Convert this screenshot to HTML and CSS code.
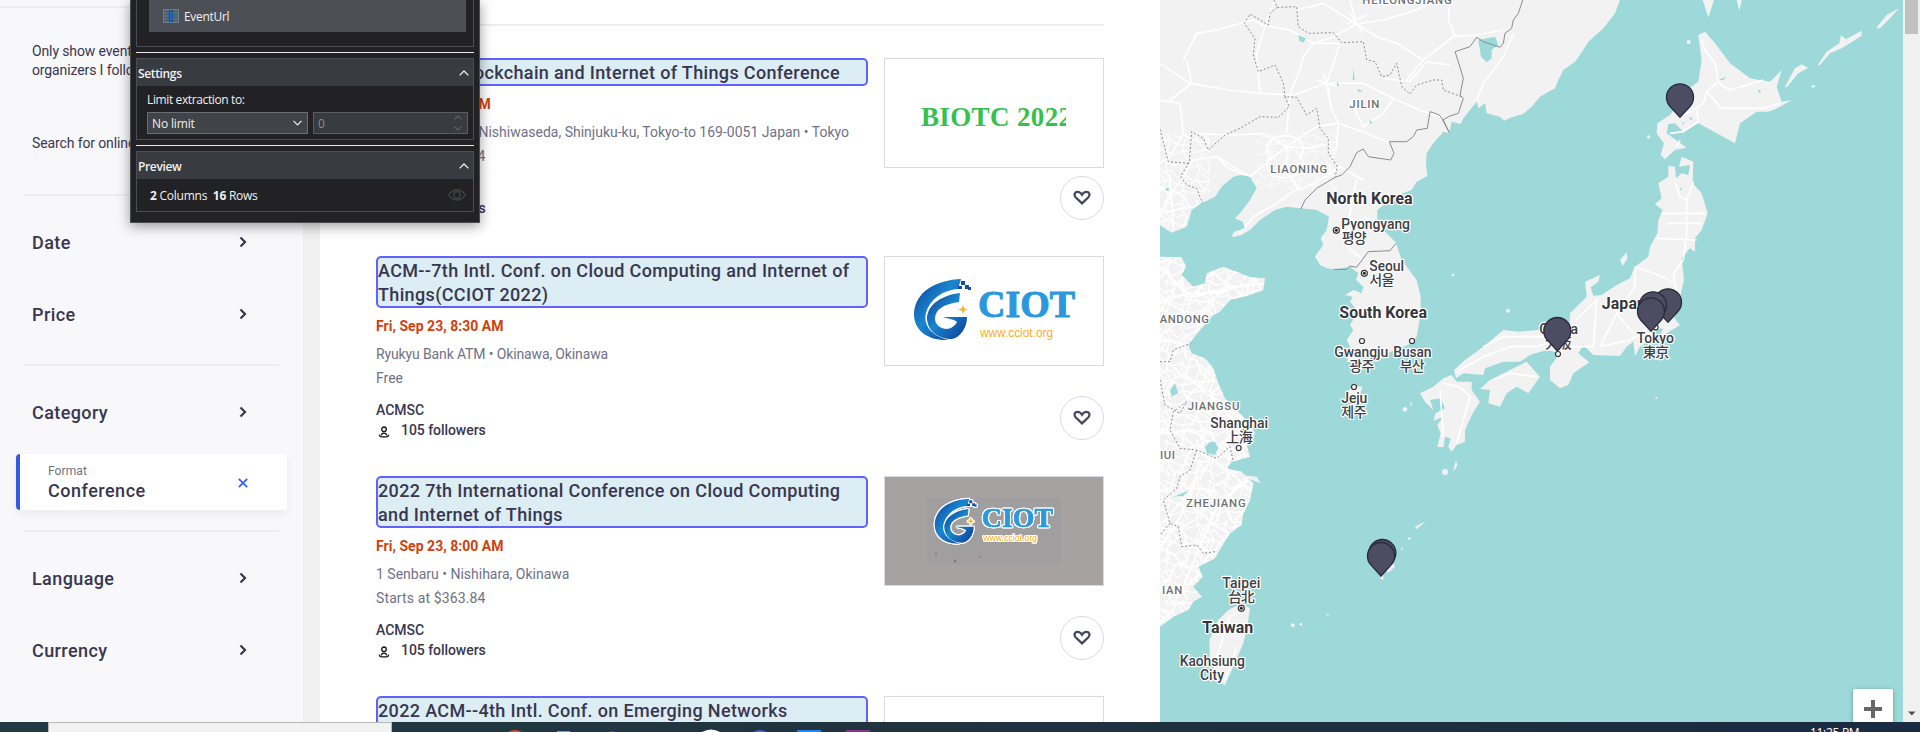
FILE: index.html
```
<!DOCTYPE html>
<html lang="en">
<head>
<meta charset="utf-8">
<title>Events</title>
<link rel="stylesheet" href="styles.css">
</head>
<body>
<svg class="defs" width="0" height="0" aria-hidden="true">
  <defs>
    <linearGradient id="swoosh" x1="0" y1="0" x2="1" y2="1"><stop offset="0" stop-color="#0c3f96"/><stop offset=".45" stop-color="#1a86cf"/><stop offset="1" stop-color="#0a3a95"/></linearGradient>
    <symbol id="chev" viewBox="0 0 8 12"><path d="M1.5 1.5 6 6l-4.500 4.500" fill="none" stroke="#39364f" stroke-width="2.200"/></symbol>
    <symbol id="heart" viewBox="0 0 18 16"><path d="M9 13.400 2.600 7.200C.4 4.600 2 1.800 4.600 1.800c2.200 0 3.400 1.200 4.400 3 1-1.800 2.200-3 4.400-3 2.600 0 4.200 2.800 2 5.400z" fill="none" stroke="#44445f" stroke-width="2.200"/></symbol>
    <symbol id="person" viewBox="0 0 12 12"><circle cx="6" cy="3.300" r="2.300" fill="none" stroke="#111" stroke-width="1.300"/><path d="M1.200 8.600c.2 1.500 1 2.100 2.300 2.200h5c1.300-.1 2.100-.7 2.300-2.200M3.300 9.300c.2-1.400 1.100-2.100 2.700-2.100s2.500.7 2.700 2.100" fill="none" stroke="#111" stroke-width="1.300"/></symbol>
    <symbol id="up" viewBox="0 0 10 6"><path d="M.6 5.400 5 1l4.400 4.400" fill="none" stroke="currentColor" stroke-width="1.300"/></symbol>
    <symbol id="mark" viewBox="0 0 166 66">
      <path d="M48 2C24 3 2 14 1 37c0 16 13 27 35 26C18 59 10 48 13 36 17 22 30 13 45 12z" fill="url(#swoosh)"/>
      <path d="M47 16C30 18 14 27 14 42c1 13 12 20 25 20 9-2 15-12 15-22H30c6 2 11 2 14 5-4 8-15 10-21 1-4-12 7-19 23-21z" fill="url(#swoosh)"/>
      <path d="M48 4h4v4h-4zM52 8h4v4h-4zM45 9h4v3h-4zM55 10h3v3h-3z" fill="#124d9e"/>
      <path d="m50 28 1.300 3.200L55 32.500l-3.700 1.200L50 37l-1.300-3.300-3.700-1.200 3.700-1.300z" fill="#f8b62b"/>
      <text x="65" y="40" class="mark-name" textLength="97" lengthAdjust="spacingAndGlyphs">CIOT</text>
      <text x="67" y="60" class="mark-url" textLength="73" lengthAdjust="spacingAndGlyphs">www.cciot.org</text>
    </symbol>
  </defs>
</svg>

<div class="screen">
  <aside class="filters">
    <div class="rule full"></div>
    <p class="note follow">Only show events from<br>organizers I follow</p>
    <p class="note online">Search for online events</p>
    <div class="rule"></div>
    <div class="group first">
      <div class="row"><span>Date</span><svg class="chev"><use href="#chev"/></svg></div>
      <div class="row"><span>Price</span><svg class="chev"><use href="#chev"/></svg></div>
    </div>
    <div class="rule"></div>
    <div class="group second">
      <div class="row"><span>Category</span><svg class="chev"><use href="#chev"/></svg></div>
    </div>
    <div class="picked">
      <div><div class="picked-key">Format</div><div class="picked-val">Conference</div></div>
      <svg class="x" viewBox="0 0 10 10"><path d="m.8.8 8.400 8.400M9.200.8.8 9.200" stroke="#3d64ff" stroke-width="1.900"/></svg>
    </div>
    <div class="rule"></div>
    <div class="group first">
      <div class="row"><span>Language</span><svg class="chev"><use href="#chev"/></svg></div>
      <div class="row"><span>Currency</span><svg class="chev"><use href="#chev"/></svg></div>
    </div>
  </aside>
  <div class="track"></div>

  <main class="results">
    <div class="results-rule"></div>
    <article class="card">
      <div class="info">
        <h3 class="title right"><span>2022 4th Blockchain and Internet of Things Conference</span></h3>
        <p class="when narrow">Fri, Jul 8, 9:00 AM</p>
        <p class="meta addr">1-21-1 Nishiwaseda, Shinjuku-ku, Tokyo-to 169-0051 Japan • Tokyo</p>
        <p class="meta price">Starts at $363.84</p>
        <p class="org">ACMSC</p>
        <p class="fans"><svg><use href="#person"/></svg>105 followers</p>
      </div>
      <div class="side">
        <div class="thumb"><svg viewBox="0 0 218 108"><svg x="36" y="40" width="145" height="35"><text x="0" y="27" class="biotc" textLength="151">BIOTC 2022</text></svg></svg></div>
        <div class="like"><svg><use href="#heart"/></svg></div>
      </div>
    </article>
    <article class="card tall">
      <div class="info">
        <h3 class="title"><span>ACM--7th Intl. Conf. on Cloud Computing and Internet of</span><br><span>Things(CCIOT 2022)</span></h3>
        <p class="when">Fri, Sep 23, 8:30 AM</p>
        <p class="meta tight">Ryukyu Bank ATM • Okinawa, Okinawa</p>
        <p class="meta">Free</p>
        <p class="org">ACMSC</p>
        <p class="fans"><svg><use href="#person"/></svg>105 followers</p>
      </div>
      <div class="side">
        <div class="thumb"><svg viewBox="0 0 218 108"><use href="#mark" x="28" y="20" width="166" height="66"/></svg></div>
        <div class="like"><svg><use href="#heart"/></svg></div>
      </div>
    </article>
    <article class="card tall">
      <div class="info">
        <h3 class="title"><span>2022 7th International Conference on Cloud Computing</span><br><span>and Internet of Things</span></h3>
        <p class="when">Fri, Sep 23, 8:00 AM</p>
        <p class="meta">1 Senbaru • Nishihara, Okinawa</p>
        <p class="meta price">Starts at $363.84</p>
        <p class="org">ACMSC</p>
        <p class="fans"><svg><use href="#person"/></svg>105 followers</p>
      </div>
      <div class="side">
        <div class="thumb grey"><svg viewBox="0 0 218 108"><rect x="42" y="21" width="134" height="67" fill="#a09e9e"/><g class="halo"><use href="#mark" x="49" y="20" width="122" height="49"/></g><circle cx="51" cy="77" r="1.200" fill="#858286"/><circle cx="70" cy="84" r="1.300" fill="#77747a"/><circle cx="95" cy="80" r="1" fill="#858286"/></svg></div>
        <div class="like"><svg><use href="#heart"/></svg></div>
      </div>
    </article>
    <article class="card tall">
      <div class="info">
        <h3 class="title"><span>2022 ACM--4th Intl. Conf. on Emerging Networks</span><br><span>Communications</span></h3>
      </div>
      <div class="side"><div class="thumb"></div></div>
    </article>
  </main>

  <section class="map">
    <svg class="mapsvg" viewBox="30 0 2229 2166">
      <defs>
        <path id="north" d="M30 0H1410L1395 40 1360 85 1315 125 1290 165 1275 185 1240 210 1225 240 1215 265 1170 290 1145 320 1118 343 1085 352 1063 362 1050 350 1010 340 1005 310 985 325 980 305 960 330 940 355 932 372 905 365 898 400 880 395 850 430 830 460 828 490 832 528 800 545 785 570 745 585 720 600 682 630 682 665 700 690 738 728 755 780 800 840 812 890 812 940 800 1010 785 1030 750 1045 705 1062 680 1085 640 1070 625 1090 590 1085 605 1050 590 1020 610 990 600 975 615 950 620 930 600 905 608 890 585 885 610 870 635 880 640 860 618 840 625 820 600 800 560 808 530 805 510 795 495 770 520 735 512 715 530 690 537 650 500 630 452 625 410 620 375 630 330 660 300 690 275 705 245 712 252 695 285 685 278 665 255 655 270 640 300 600 320 565 300 530 272 525 250 530 215 560 195 590 150 612 125 630 110 680 65 698 30 675Z"/>
        <path id="south" d="M30 770 95 772 108 800 95 825 130 860 165 850 170 820 220 800 260 815 300 832 345 835 340 870 300 885 240 900 210 935 190 945 150 990 115 1035 125 1060 165 1075 190 1105 205 1150 225 1195 250 1220 280 1250 315 1300 290 1335 300 1370 245 1385 230 1405 275 1415 310 1450 300 1500 280 1540 275 1575 240 1600 215 1640 195 1675 145 1700 158 1730 130 1760 155 1790 130 1805 115 1830 70 1850 30 1880Z"/>
        <path id="japan" d="M912 1110 945 1080 1000 1040 1060 990 1110 995 1160 990 1258 985 1260 940 1310 890 1305 845 1350 825 1345 845 1322 862 1330 887 1355 885 1400 855 1440 835 1455 800 1495 770 1500 740 1522 700 1525 660 1538 630 1515 612 1535 595 1525 550 1555 530 1555 497 1575 500 1578 535 1595 520 1615 525 1620 495 1587 500 1595 470 1630 485 1628 550 1655 580 1673 640 1655 690 1635 715 1635 755 1620 745 1595 775 1602 840 1590 890 1565 910 1570 950 1590 975 1550 1000 1530 1010 1538 985 1510 990 1500 1020 1470 1040 1455 1068 1450 1025 1430 1040 1410 1068 1330 1065 1300 1035 1285 1060 1318 1087 1270 1120 1255 1155 1230 1165 1200 1140 1200 1100 1230 1060 1190 1050 1140 1065 1110 1085 1060 1085 1005 1105 1000 1125 940 1120 918 1135ZM1645 105 1665 95 1695 130 1740 190 1800 235 1860 245 1895 210 1880 260 1895 305 1925 300 1875 328 1855 335 1820 335 1770 370 1755 430 1710 405 1645 370 1600 395 1575 370 1555 372 1550 400 1610 443 1575 450 1545 478 1532 465 1542 430 1520 400 1522 370 1560 345 1585 310 1610 270 1645 245 1655 180ZM810 1180 850 1160 880 1135 905 1125 920 1145 965 1145 965 1170 990 1205 968 1240 945 1290 945 1325 920 1335 905 1355 895 1340 902 1315 885 1310 880 1342 862 1340 872 1300 862 1275 880 1250 850 1262 857 1240 885 1225 872 1195 840 1200 850 1230 825 1205ZM1020 1140 1080 1110 1130 1085 1170 1130 1135 1180 1100 1160 1070 1180 1050 1220 1015 1210 1020 1170 990 1167Z"/>
        <path id="isles" d="M1905 260 1935 205 1955 193 1975 203 1945 220 1910 262ZM2003 195 2030 155 2068 130 2073 105 2088 118 2135 92V107L2075 145 2040 160 2010 195ZM2178 85 2210 45 2247 25 2220 55 2190 85ZM1658 0H1692L1675 52ZM1760 0H1775L1768 32ZM1410 780 1430 757 1432 775 1418 798ZM590 1175 610 1158 638 1160 632 1177 600 1195ZM795 1580 828 1563 800 1588ZM705 1710 730 1690 735 1700 715 1718ZM690 1735 700 1725 700 1740ZM526 1838 540 1848 530 1846ZM910 1410 918 1380 922 1395 912 1413ZM780 1215 786 1203 784 1220ZM270 1425 320 1430 332 1450 300 1438ZM1985 255 2000 258 1985 265Z"/>
        <path id="taiwan" d="M235 1830 275 1810 300 1825 292 1880 280 1930 250 2000 225 2055 215 2050 180 1985 178 1920 205 1860Z"/>
        <clipPath id="landclip"><use href="#north"/></clipPath>
        <clipPath id="southclip"><use href="#south"/></clipPath>
        <pattern id="roads" width="130" height="120" patternUnits="userSpaceOnUse"><path d="M0 20 22 14 40 38 64 30 80 52 104 44 130 62M10 0 18 30 8 58 30 84 22 120M52 0 46 32 62 60 50 92 60 120M100 0 92 24 110 52 98 86 112 120M0 62 30 66 56 60 90 76 130 70M0 98 40 90 70 106 98 92 130 98M130 20 108 26 96 8 70 16 40 0M22 40 50 60 34 90" fill="none" stroke="#fff" stroke-width="4"/></pattern>
        <pattern id="roads2" width="170" height="150" patternUnits="userSpaceOnUse" patternTransform="rotate(37)"><path d="M0 20 22 14 50 38 84 30 120 52 170 20M10 0 18 40 8 78 30 104 10 150M72 0 66 42 82 80 60 112 72 150M130 0 122 34 140 72 128 116 130 150M0 92 40 86 76 94 120 86 170 92" fill="none" stroke="#fff" stroke-width="5"/></pattern>
      </defs>
      <rect x="30" width="2229" height="2166" fill="#9dd9d9"/>
      <g fill="#f2f2f2">
        <use href="#north"/><use href="#south"/><use href="#japan"/><use href="#isles"/><use href="#taiwan"/>
        <circle cx="1616" cy="126" r="6"/><circle cx="1496" cy="411" r="5"/><circle cx="778" cy="1616" r="4"/><circle cx="428" cy="1876" r="6"/><circle cx="453" cy="1873" r="4"/><circle cx="885" cy="1416" r="9"/><circle cx="765" cy="1228" r="7"/><circle cx="1074" cy="932" r="6"/><circle cx="909" cy="825" r="4"/><circle cx="756" cy="1646" r="3"/><circle cx="1519" cy="1194" r="3"/>
      </g>
      <g clip-path="url(#southclip)"><rect x="30" y="760" width="320" height="1130" fill="url(#roads)"/><rect x="30" y="760" width="320" height="1130" fill="url(#roads2)"/><path d="M30 800 90 860 130 890 250 860 340 850M30 900 120 880 200 880 300 850M100 1180 200 1260 290 1300M30 1300 130 1290 240 1380M150 1380 120 1500 60 1600 30 1640M290 1440 200 1520 150 1640 100 1760" fill="none" stroke="#fff" stroke-width="6"/></g>
      <g clip-path="url(#landclip)">
        <g fill="none" stroke="#fff" stroke-width="5">
          <path d="M375 0 362 30 345 80 310 60 200 90 140 100 100 180M355 78 420 90 490 130 550 110 620 72 600 0M620 72 520 10 440 30M620 72 680 110 740 130 820 180 910 110 980 105 1060 90M620 72 700 60 800 30 860 0M900 0 895 60 915 110M490 130 460 170 450 210 420 280 410 400M490 130 570 130 530 250 640 250 730 295 820 335 880 350M530 250 430 285 330 280 240 270 120 250 30 190M110 180 125 250 60 300M530 250 545 330 565 370 650 400 720 430M565 370 560 440 540 500 545 530M410 440 410 520 450 570M410 440 340 400 250 405 130 400M410 440 360 480 300 530 200 470 130 480M410 440 480 445 540 430M410 440 500 380 565 370M30 300 90 310 100 400 60 470 30 490M130 480 100 530 50 600 30 650M200 470 230 500 280 525M700 235 780 245 830 185 900 195M730 295 700 340 640 380 600 300M980 300 1000 250 1060 170 1090 100M330 280 320 160 345 80M820 180 770 240M450 570 510 540 570 500 640 540M620 540 600 640 590 740 640 780M640 650 700 680M270 700 310 650 380 610 450 560M30 560 90 580 120 620 30 640M60 520 70 690"/>
          <path d="M360 470A55 40 0 1 1 450 470 55 40 0 1 1 360 470M590 72 650 45M600 40 640 100M500 240 560 260M520 220 540 280"/>
        </g>
        <rect x="30" y="400" width="150" height="300" fill="url(#roads)" opacity=".9"/><rect x="320" y="400" width="240" height="170" fill="url(#roads)" opacity=".6"/>
      </g>
      <g fill="none" stroke="#fff" stroke-width="5">
        <path d="M1655 120 1665 150 1695 190 1705 245 1670 275 1660 310 1630 330 1590 350M1705 250 1740 270 1840 240M1670 275 1715 325 1840 325 1890 310M1560 400 1600 395 1645 365 1640 330M1590 420 1580 440M1575 545 1590 590 1610 600 1610 700 1600 780 1570 820 1580 880M1630 545 1610 600M1535 640 1665 640M1550 670 1655 670M1522 715 1640 720M1455 800 1540 830 1570 850M1455 800 1455 860 1400 940 1350 1040M1280 960 1340 900 1330 1040 1250 1040 1220 1070M1350 1040 1440 1020 1500 980M1400 940 1450 1000M930 1110 1000 1070 1080 1040 1160 1040 1240 1010M1000 1040 1060 1010 1200 1010M880 1150 930 1160 960 1190 920 1330M870 1170 880 1310M1030 1140 1080 1120 1160 1130M195 1985 240 1850 280 1830M225 2040 260 1940"/>
      </g>
      <g fill="#9dd9d9">
        <path d="M985 120 1035 110 1045 135 1025 150 1025 175 1010 187 993 170ZM165 1340 180 1325 195 1325 205 1345 195 1365 170 1360ZM60 1170 75 1150 85 1180 65 1190ZM445 105 468 115 460 128 448 122ZM610 200 614 240 608 240ZM622 266 638 274 626 276ZM560 245 568 255 562 260ZM660 360 668 368 658 372ZM70 1490 115 1472 100 1488ZM1705 240 1730 230 1720 240Z"/>
        <circle cx="1600" cy="370" r="3"/><circle cx="1622" cy="356" r="4"/><circle cx="1828" cy="274" r="4"/><circle cx="1592" cy="567" r="3"/><circle cx="52" cy="568" r="5"/>
      </g>
      <g fill="none" stroke="#8a8c90" stroke-width="3">
        <path d="M1118 0 1105 40 1090 60 1085 85 1065 100 1060 130 1050 142 1000 125 980 112 960 140 915 155 925 185 940 235 930 285 940 295 925 340 900 348 878 360 898 398M898 398 880 360 868 345 840 335 832 385 800 390 790 410 770 425 718 425 732 460 722 480 655 470 640 447 620 458 600 500 575 525 555 532 500 565 465 600 452 628M552 808 590 808 600 798 620 802 655 755 720 752 738 730"/>
        <path stroke-dasharray="6 6" d="M372 0 382 22 440 20 445 80 475 100 550 98 575 128 640 125 650 180 675 185 695 230 720 225 740 190 755 260 780 282 800 255 850 240 875 240 880 270 940 292M382 22 360 40 355 75 300 42 283 70 315 115 310 165 325 215 375 195 400 250 405 290 440 292 470 345 500 325 510 385 535 415 535 460 562 500 555 532M405 290 418 320 385 352 330 350 270 385 225 405 175 450 160 415 125 395 118 485 92 530 110 555 140 565 158 610M30 388 55 485 118 490M30 1085 60 1085 70 1050 122 1030M30 1140 45 1215 90 1240 110 1205 70 1235 60 1290 90 1345 140 1350 200 1375 240 1340 250 1385M140 1350 120 1410 90 1430 80 1465 40 1500 60 1570 85 1580 95 1640 140 1635 160 1660 195 1655M60 1570 30 1605"/>
      </g>
      <g class="province">
        <text x="637" y="12" textLength="268">HEILONGJIANG</text><text x="598" y="324" textLength="90">JILIN</text><text x="361" y="519" textLength="171">LIAONING</text><text x="29" y="969" textLength="148">ANDONG</text><text x="113" y="1230" textLength="155">JIANGSU</text><text x="30" y="1376" textLength="45">IUI</text><text x="108" y="1521" textLength="179">ZHEJIANG</text><text x="36" y="1782" textLength="61">IAN</text>
      </g>
      <g class="country">
        <text x="529" y="611" textLength="259">North Korea</text><text x="568" y="953" textLength="263">South Korea</text><text x="157" y="1898" textLength="153">Taiwan</text><text x="1355" y="926" textLength="133">Japan</text>
      </g>
      <g class="city">
        <text x="574" y="688" textLength="206">Pyongyang</text><text x="575" y="728" textLength="75">평양</text>
        <text x="658" y="814" textLength="104">Seoul</text><text x="658" y="854" textLength="75">서울</text>
        <text x="553" y="1071" textLength="162">Gwangju</text><text x="598" y="1112" textLength="75">광주</text>
        <text x="730" y="1071" textLength="115">Busan</text><text x="749" y="1112" textLength="75">부산</text>
        <text x="574" y="1209" textLength="78">Jeju</text><text x="574" y="1251" textLength="76">제주</text>
        <text x="181" y="1284" textLength="173">Shanghai</text><text x="228" y="1327" textLength="80">上海</text>
        <text x="217" y="1765" textLength="114">Taipei</text><text x="234" y="1807" textLength="80">台北</text>
        <text x="89" y="1999" textLength="196">Kaohsiung</text><text x="150" y="2041" textLength="72">City</text>
        <text x="1168" y="1002" textLength="116">Osaka</text><text x="1185" y="1044" textLength="80">大阪</text>
        <text x="1460" y="1029" textLength="112">Tokyo</text><text x="1478" y="1071" textLength="80">東京</text>
      </g>
      <g fill="#fff" stroke="#333" stroke-width="3.500">
        <circle cx="636" cy="1023" r="7.500"/><circle cx="786" cy="1023" r="7.500"/><circle cx="612" cy="1161" r="7.500"/><circle cx="266" cy="1344" r="7.500"/><circle cx="1224" cy="1062" r="7.500"/><circle cx="1517" cy="982" r="7.500"/>
        <circle cx="559" cy="691" r="9"/><circle cx="643" cy="820" r="9"/><circle cx="274" cy="1825" r="9"/>
      </g>
      <g fill="#222"><circle cx="559" cy="691" r="4.500"/><circle cx="643" cy="820" r="4.500"/><circle cx="274" cy="1825" r="4.500"/></g>
      <defs><path id="pin" d="M0 60-31 26A40.500 40.500 0 1 1 31 26Z"/></defs>
      <g fill="#4c4d62" stroke="#2b2b3a" stroke-width="4" stroke-linejoin="round">
        <use href="#pin" x="1590" y="292"/><use href="#pin" x="1554" y="907"/><use href="#pin" x="1509" y="916"/><use href="#pin" x="1503" y="934"/><use href="#pin" x="1222" y="993"/><use href="#pin" x="697" y="1659"/><use href="#pin" x="693" y="1668"/>
      </g>
    </svg>
    <div class="zoom-in"><svg viewBox="0 0 18 18"><path d="M7 0h4v7h7v4h-7v7H7v-7H0V7h7z" fill="#666"/></svg></div>
  </section>
  <div class="pagebar"><div class="thumbbar"></div><svg viewBox="0 0 8 5"><path d="M0 .5h7.500L3.800 4.500z" fill="#505050"/></svg></div>

  <div class="panel">
    <div class="box list"><div class="item"><svg viewBox="0 0 16 14"><path d="M0 0h16v14H0z" fill="#6a7d8c"/><path d="M1 1.500h4v2H1zm0 3h4v2H1zm0 3h4v2H1zm0 3h4v2H1zM11 1.500h4v2h-4zm0 3h4v2h-4zm0 3h4v2h-4zm0 3h4v2h-4z" fill="#4b5d6d"/><path d="M5.500 1h5v12h-5z" fill="#34495c"/><path d="M7 2h2.300v10H7z" fill="#0a6ee8"/></svg><span>EventUrl</span></div></div>
    <div class="split"></div>
    <div class="box">
      <div class="head"><span>Settings</span><svg><use href="#up"/></svg></div>
      <div class="body settings">
        <div class="limit">Limit extraction to:</div>
        <div class="fields">
          <div class="select"><span>No limit</span><svg class="down"><use href="#up"/></svg></div>
          <div class="num"><span>0</span><div class="spin"><svg><use href="#up"/></svg><svg class="down"><use href="#up"/></svg></div></div>
        </div>
      </div>
    </div>
    <div class="split"></div>
    <div class="box">
      <div class="head"><span>Preview</span><svg><use href="#up"/></svg></div>
      <div class="body preview"><div><b>2</b> Columns &nbsp;<b>16</b> Rows</div><svg viewBox="0 0 18 12"><path d="M.7 6C5-.9 13-.9 17.300 6 13 12.900 5 12.900.7 6z" fill="none" stroke="#45484c" stroke-width="1.200"/><circle cx="9" cy="6" r="3.300" fill="none" stroke="#45484c" stroke-width="1.200"/></svg></div>
    </div>
  </div>
</div>

<footer class="taskbar">
  <div class="search"></div>
  <svg class="apps" viewBox="0 0 500 10"><path d="M116 10q7-4 14 0z" fill="#d8472f"/><path d="M165 9h13v1h-13z" fill="#35b5e0"/><path d="M217 10l3-1 3 1z" fill="#1277cf"/><path d="M310 10q9-5 18 0z" fill="#fff"/><path d="M361 10q7-4 14 0z" fill="#5558e0"/><path d="M405 8h24v2h-24z" fill="#1c86ee"/><path d="M454 8h24v2h-24z" fill="#86358f"/></svg>
  <div class="clock">11:25 PM</div>
</footer>
</body>
</html>
```
FILE: styles.css
```
* { box-sizing: border-box; }
body { margin: 0; width: 1920px; height: 732px; overflow: hidden; background: #fff; font-family: Roboto, "Noto Sans", sans-serif; color: #39364f; display: flex; flex-direction: column; }
.defs { position: absolute; }
p, h3 { margin: 0; }
.screen { position: relative; display: flex; height: 722px; overflow: hidden; }

/* filter column */
.filters { width: 303px; background: #f8f7fa; flex: none; padding-top: 6px; }
.rule { height: 2px; margin: 0 24px; background: #eeedf2; }
.rule.full { margin: 0; }
.note { padding-left: 32px; font-size: 14px; line-height: 19px; letter-spacing: .02px; white-space: nowrap; }
.follow { margin-top: 34px; height: 92px; }
.online { height: 60px; }
.follow, .online { letter-spacing: -.12px; }
.group.first { padding: 11px 0 13px; }
.group.second { padding-top: 11px; }
.row { display: flex; align-items: center; justify-content: space-between; height: 72px; padding: 0 56px 0 32px; font-size: 18px; font-weight: 500; letter-spacing: .4px; }
.row span { padding-bottom: 2px; }
.row .chev { width: 8px; height: 12px; margin-top: -2px; }
.picked { display: flex; justify-content: space-between; align-items: center; width: 271px; height: 56px; margin: 5px 0 20px 16px; padding: 0 39px 0 28px; background: #fff; border-left: 4px solid #3659e3; border-radius: 4px; box-shadow: 0 4px 8px rgba(40,44,53,.06); }
.picked-key { font-size: 12px; line-height: 15px; color: #6f7287; margin-top: 2px; letter-spacing: .1px; }
.picked-val { font-size: 18px; font-weight: 500; line-height: 24px; letter-spacing: .5px; }
.x { width: 10px; height: 10px; margin-top: 2px; }
.track { width: 17px; background: #f0f0f0; flex: none; }

/* result cards */
.results { width: 840px; flex: none; padding: 24px 56px 0; }
.results-rule { height: 2px; background: #eeedf2; margin-bottom: 32px; }
.card { display: flex; justify-content: space-between; height: 162px; margin-bottom: 36px; }
.card.tall { height: 184px; }
.info { width: 492px; }
.title { border: 2px solid #6161ff; border-radius: 5px; background: #dcedf4; font-size: 18px; line-height: 24px; font-weight: 500; letter-spacing: .35px; white-space: nowrap; }
.title span { display: inline-block; padding-top: 1px; height: 24px; vertical-align: top; }
.title.right { text-align: right; padding-right: 29px; }
.when { margin-top: 9px; font-size: 14px; line-height: 18px; font-weight: 700; letter-spacing: .03px; color: #d1410c; }
.narrow { width: 112px; text-align: right; white-space: nowrap; }
.meta { font-size: 14px; line-height: 24px; color: #6f7287; margin-top: 7px; white-space: nowrap; }
.meta + .meta { margin-top: 0; }
.tight { letter-spacing: -.13px; }
.price { letter-spacing: .12px; }
.addr { width: 473px; direction: rtl; unicode-bidi: plaintext; text-align: right; }
.org { font-size: 14px; line-height: 20px; margin-top: 10px; font-weight: 500; }
.fans { display: flex; align-items: center; font-size: 14px; line-height: 20px; font-weight: 500; letter-spacing: -.05px; }
.fans svg { width: 12px; height: 12px; margin: 3px 11px 0 2px; }
.side { display: flex; flex-direction: column; justify-content: space-between; align-items: flex-end; }
.thumb { width: 220px; height: 110px; border: 1px solid #dbdae3; }
.thumb svg { display: block; width: 218px; height: 108px; }
.thumb svg svg { width: 145px; height: 35px; }
.grey { background: #a5a2a1; }
.halo { filter: drop-shadow(1px 0 0 #fff) drop-shadow(-1px 0 0 #fff) drop-shadow(0 1px 0 #fff) drop-shadow(0 -1px 0 #fff); }
.biotc { font: bold 27px "Liberation Serif", serif; fill: #32c24d; }
.mark-name { font: bold 38px "Liberation Serif", serif; fill: #2b98de; stroke: #2b98de; stroke-width: 1; }
.mark-url { font: 13px "Liberation Sans", sans-serif; fill: #f8ae1e; }
.like { display: flex; align-items: center; justify-content: center; width: 44px; height: 44px; border: 1px solid #dbdae3; border-radius: 50%; }
.like svg { width: 18px; height: 16px; }

/* map */
.map { position: relative; width: 743px; flex: none; }
.mapsvg { display: block; width: 743px; height: 722px; }
.mapsvg text { paint-order: stroke; stroke: #fff; stroke-width: 7px; stroke-linejoin: round; font-family: Roboto, "Noto Sans CJK KR", "Noto Sans CJK TC", sans-serif; }
.province text { font-size: 34px; font-weight: 500; fill: #6e7074; }
.country text { font-size: 48px; font-weight: 700; fill: #35363c; }
.city text { font-size: 42px; font-weight: 500; fill: #3e4045; }
.zoom-in { position: absolute; right: 10px; bottom: -7px; width: 40px; height: 40px; background: #fff; border-radius: 2px; box-shadow: 0 1px 4px rgba(0,0,0,.3); }
.zoom-in svg { display: block; width: 18px; height: 18px; margin: 11px; }
.pagebar { display: flex; flex-direction: column; justify-content: space-between; align-items: center; width: 17px; background: #f0f0f0; padding-bottom: 6px; }
.thumbbar { width: 13px; height: 34px; background: #c1c1c1; }
.pagebar svg { width: 8px; height: 5px; }

/* floating extraction panel */
.panel { position: absolute; left: 130px; top: 0; width: 350px; height: 223px; padding: 0 5px; background: #222224; border: 1px solid #4a4d52; border-top: 0; box-shadow: 0 3px 12px rgba(0,0,0,.4); font: 12px "Open Sans", sans-serif; letter-spacing: -.15px; color: #f0f0f0; }
.box { border: 1px solid #4b4e53; }
.list { height: 47px; border-top: 0; padding: 0 7px 0 12px; }
.item { display: flex; align-items: center; height: 32px; padding-left: 14px; background: #4d4f57; letter-spacing: -.3px; }
.item svg { width: 16px; height: 14px; margin-right: 5px; }
.split { height: 1px; margin: 5px 0; background: #e8e8e8; }
.head { display: flex; align-items: center; justify-content: space-between; height: 27px; padding: 0 4px 0 1px; background: #383b40; font-weight: 600; letter-spacing: -.35px; }
.head span { padding-top: 1px; }
.head svg { width: 10px; height: 6px; }
.settings { height: 53px; padding: 6px 5px 0 10px; }
.limit { line-height: 16px; letter-spacing: -.38px; }
.fields { display: flex; gap: 5px; margin-top: 4px; }
.select, .num { display: flex; align-items: center; justify-content: space-between; height: 22px; border: 1px solid #6a6d72; padding: 0 5px 0 4px; }
.select { width: 161px; background: #404347; }
.select svg { width: 9px; height: 6px; }
.down { transform: rotate(180deg); }
.num { width: 155px; background: #383b40; color: #8b8e92; border-color: #5a5d62; }
.spin { display: flex; flex-direction: column; gap: 6px; color: #66696d; }
.spin svg { width: 8px; height: 5px; }
.preview { display: flex; align-items: center; justify-content: space-between; height: 32px; padding: 0 7px 0 13px; letter-spacing: -.25px; }
.preview svg { width: 18px; height: 12px; }

/* taskbar sliver */
.taskbar { display: flex; height: 10px; background: linear-gradient(90deg, #213a43, #20333f 50%, #1a2a42); overflow: hidden; }
.search { width: 344px; margin-left: 48px; background: #f2f2f2; border: 1px solid #b8b8b8; border-bottom: 0; }
.apps { width: 500px; height: 10px; }
.clock { margin: 5px 0 0 auto; width: 110px; height: 14px; font: 12px/12px "Open Sans", sans-serif; letter-spacing: -.3px; color: #fff; }
```
